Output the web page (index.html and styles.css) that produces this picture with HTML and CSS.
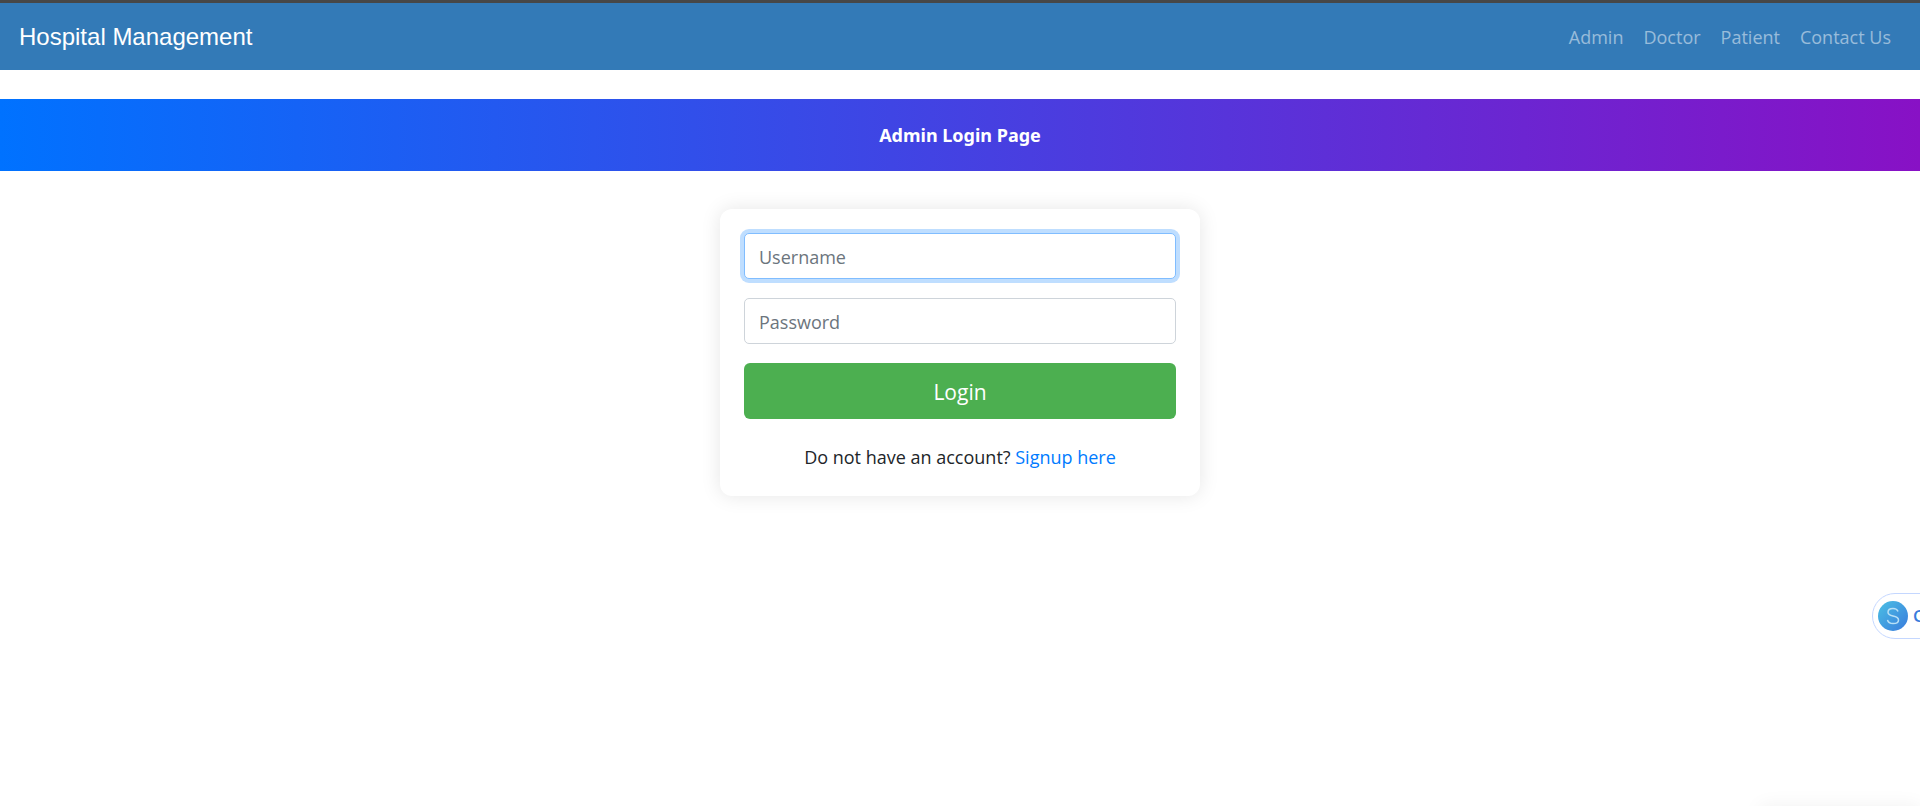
FILE: index.html
```html
<!DOCTYPE html>
<html lang="en">
<head>
<meta charset="utf-8">
<meta name="viewport" content="width=device-width, initial-scale=1">
<title>Admin Login</title>
<link rel="stylesheet" href="styles.css">
</head>
<body>
<header class="navbar">
  <a class="brand" href="#">Hospital Management</a>
  <nav class="nav-links">
    <a href="#">Admin</a>
    <a href="#">Doctor</a>
    <a href="#">Patient</a>
    <a href="#">Contact Us</a>
  </nav>
</header>
<main>
  <h1 class="banner">Admin Login Page</h1>
  <form class="card">
    <input class="field" type="text" placeholder="Username" aria-label="Username" autofocus>
    <input class="field" type="password" placeholder="Password" aria-label="Password">
    <button class="login" type="submit">Login</button>
    <p class="signup">Do not have an account? <a href="#">Signup here</a></p>
  </form>
</main>
<button class="assistant" type="button" aria-label="Assistant">
  <svg class="assistant-logo" viewBox="0 0 30 30" aria-hidden="true">
    <defs>
      <linearGradient id="logo-fill" x1="0" y1="0" x2="1" y2="1">
        <stop offset="0" stop-color="#4bc0e4"/>
        <stop offset="1" stop-color="#397bdc"/>
      </linearGradient>
    </defs>
    <circle cx="15" cy="15" r="15" fill="url(#logo-fill)"/>
    <path d="M20 10.5C19.3 8.400 17.500 7.500 15 7.500C12 7.500 10 8.900 10 11.200C10 13.500 11.700 14.300 15 15C18.600 15.700 20.500 16.600 20.500 18.900C20.500 21.200 18.300 22.500 15.200 22.500C12 22.500 10 21.200 9.500 18.800" fill="none" stroke="#b8e0f6" stroke-width="1.500"/>
  </svg>
  <span>C</span>
</button>
<div class="tray-shadow"></div>
</body>
</html>
```
FILE: styles.css
```css
* {
  box-sizing: border-box;
}

body {
  margin: 0;
  min-height: 100vh;
  overflow: hidden;
  background: #fff;
  color: #212529;
  font: 18px/27px "Open Sans", "Noto Sans", sans-serif;
}

a {
  color: #007bff;
  text-decoration: none;
}

.navbar {
  display: flex;
  align-items: center;
  justify-content: space-between;
  height: 70px;
  padding: 0 29px 0 19px;
  border-top: 3px solid #474747;
  background: #337ab7;
}

.brand {
  color: #fff;
  font: 24px/36px "Liberation Sans", Arial, sans-serif;
}

.nav-links {
  display: flex;
  gap: 20px;
  padding-top: 2px;
}

.nav-links a {
  color: rgba(255, 255, 255, 0.5);
}

.banner {
  margin: 29px 0 38px;
  padding: 24px;
  background: linear-gradient(to right, #0072ff, #8811c5);
  color: #fff;
  font-family: "Noto Sans", "Open Sans", sans-serif;
  font-size: 18px;
  font-weight: 700;
  line-height: 24px;
  text-align: center;
}

.card {
  display: flex;
  flex-direction: column;
  gap: 19px;
  width: 480px;
  max-width: 100%;
  margin: 0 auto;
  padding: 24px;
  border-radius: 12px;
  background: #fff;
  box-shadow: 0 0 20px rgba(0, 0, 0, 0.1);
}

.field {
  width: 100%;
  height: 46px;
  padding: 1px 14px 0;
  border: 1px solid #ced4da;
  border-radius: 5px;
  outline: 0;
  background: #fff;
  color: #495057;
  font: inherit;
}

.field::placeholder {
  color: #6c757d;
  opacity: 1;
}

.field:focus {
  border-color: #80bdff;
  box-shadow: 0 0 0 4px rgba(0, 123, 255, 0.25);
}

.login {
  height: 56px;
  padding: 2px 16px 0;
  border: 0;
  border-radius: 6px;
  background: #4caf50;
  color: #fff;
  font: inherit;
  font-size: 21px;
}

.signup {
  margin: 6px 0 1px;
  text-align: center;
}

.assistant {
  position: fixed;
  top: 593px;
  right: -52px;
  display: flex;
  align-items: center;
  gap: 5px;
  width: 100px;
  height: 46px;
  padding: 0 5px;
  border: 1px solid #c4d7ff;
  border-radius: 23px;
  background: #fff;
  color: #397bdc;
  font: 600 17px/24px "Open Sans", sans-serif;
}

.assistant-logo {
  flex: none;
  width: 30px;
  height: 30px;
}

.tray-shadow {
  position: fixed;
  right: 0;
  bottom: -20px;
  width: 160px;
  height: 20px;
  box-shadow: 0 0 20px rgba(0, 0, 0, 0.06);
}
```
